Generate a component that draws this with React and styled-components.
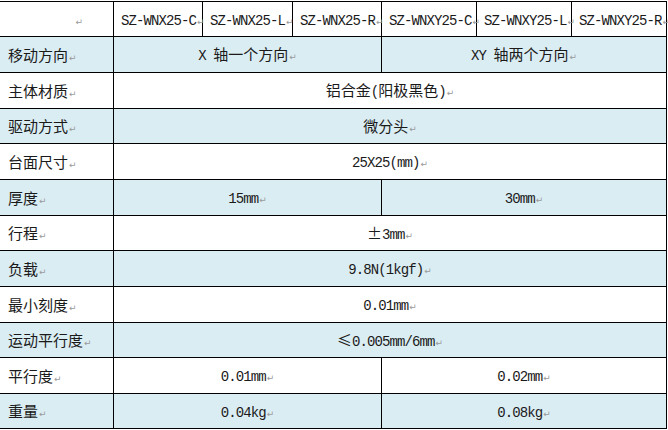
import React from "react";
import styled, { createGlobalStyle } from "styled-components";

const GlobalStyle = createGlobalStyle`
  html, body {
    margin: 0;
    padding: 0;
    background: #ffffff;
    overflow: hidden;
  }
  body {
    font-family: "Noto Sans CJK SC", "Noto Sans", sans-serif;
    color: #1a1a1a;
  }
`;

const colWidths = [114, 89, 90, 89, 95, 95, 95, 4];

const models = [
  "SZ-WNX25-C",
  "SZ-WNX25-L",
  "SZ-WNX25-R",
  "SZ-WNXY25-C",
  "SZ-WNXY25-L",
  "SZ-WNXY25-R",
];

const L = ({ children }) => <Latin>{children}</Latin>;

const rows = [
  {
    label: "移动方向",
    h: 36,
    cells: [
      { span: 3, text: <><L>X </L>轴一个方向</> },
      { span: 3, text: <><L>XY </L>轴两个方向</> },
    ],
  },
  { label: "主体材质", h: 36, cells: [{ span: 6, text: <>铝合金<L>(</L>阳极黑色<L>)</L></> }] },
  { label: "驱动方式", h: 35, cells: [{ span: 6, text: <>微分头</> }] },
  { label: "台面尺寸", h: 36, cells: [{ span: 6, text: <L>25X25(mm)</L> }] },
  {
    label: "厚度",
    h: 36,
    cells: [
      { span: 3, text: <L>15mm</L> },
      { span: 3, text: <L>30mm</L> },
    ],
  },
  { label: "行程", h: 35, cells: [{ span: 6, text: <>±<L>3mm</L></> }] },
  { label: "负载", h: 36, cells: [{ span: 6, text: <L>9.8N(1kgf)</L> }] },
  { label: "最小刻度", h: 36, cells: [{ span: 6, text: <L>0.01mm</L> }] },
  { label: "运动平行度", h: 35, cells: [{ span: 6, text: <>≤<L>0.005mm/6mm</L></> }] },
  {
    label: "平行度",
    h: 36,
    cells: [
      { span: 3, text: <L>0.01mm</L> },
      { span: 3, text: <L>0.02mm</L> },
    ],
  },
  {
    label: "重量",
    h: 35,
    cells: [
      { span: 3, text: <L>0.04kg</L> },
      { span: 3, text: <L>0.08kg</L> },
    ],
  },
];

const App = () => (
  <>
    <GlobalStyle />
    <Sheet>
      <SpecTable>
        <colgroup>
          {colWidths.map((w, i) => (
            <col key={i} style={{ width: w }} />
          ))}
        </colgroup>
        <tbody>
          <Row $h={35}>
            <HeadCorner>
              <Mark>↵</Mark>
            </HeadCorner>
            {models.map((m) => (
              <ModelCell key={m}>
                <Latin>{m}</Latin>
                <Mark>↵</Mark>
              </ModelCell>
            ))}
            <RowEnd>
              <Tick />
            </RowEnd>
          </Row>
          {rows.map((r, idx) => (
            <Row key={r.label} $h={r.h} $blue={idx % 2 === 0}>
              <LabelCell>
                {r.label}
                <Mark>↵</Mark>
              </LabelCell>
              {r.cells.map((c, ci) => (
                <ValueCell key={ci} colSpan={c.span}>
                  {c.text}
                  <Mark>↵</Mark>
                </ValueCell>
              ))}
              <RowEnd>
                <Tick />
              </RowEnd>
            </Row>
          ))}
        </tbody>
      </SpecTable>
    </Sheet>
  </>
);

export default App;

const Sheet = styled("div")`
  width: 668px;
  height: 430px;
  padding-top: 1px;
  box-sizing: border-box;
  overflow: hidden;
`;

const SpecTable = styled("table")`
  border-collapse: collapse;
  table-layout: fixed;
  width: 671px;
  margin-left: -1px;
`;

const Row = styled("tr")`
  height: ${(p) => p.$h}px;
  background: ${(p) => (p.$blue ? "#daedf3" : "#ffffff")};
`;

const Cell = styled("td")`
  border: 1px solid #000000;
  padding: 0;
  font-size: 15px;
  line-height: 1;
  white-space: nowrap;
  overflow: visible;
  vertical-align: middle;
`;

const HeadCorner = styled(Cell)`
  text-align: right;
  padding-right: 30px;
`;

const ModelCell = styled(Cell)`
  text-align: left;
  padding-left: 7px;
`;

const LabelCell = styled(Cell)`
  text-align: left;
  padding-left: 8px;
`;

const ValueCell = styled(Cell)`
  text-align: center;
`;

const RowEnd = styled("td")`
  border: none;
  background: #ffffff;
  padding: 0;
  vertical-align: top;
`;

const Tick = styled("span")`
  display: block;
  width: 2px;
  height: 1px;
  margin: 12px 0 0 1px;
  background: #9a9a9a;
`;

const Latin = styled("span")`
  font-family: "Liberation Mono", monospace;
  font-size: 14px;
  letter-spacing: -0.9px;
`;

const Mark = styled("span")`
  font-family: "DejaVu Sans", sans-serif;
  font-size: 9px;
  color: #9a9a9a;
  margin-left: 1px;
`;
